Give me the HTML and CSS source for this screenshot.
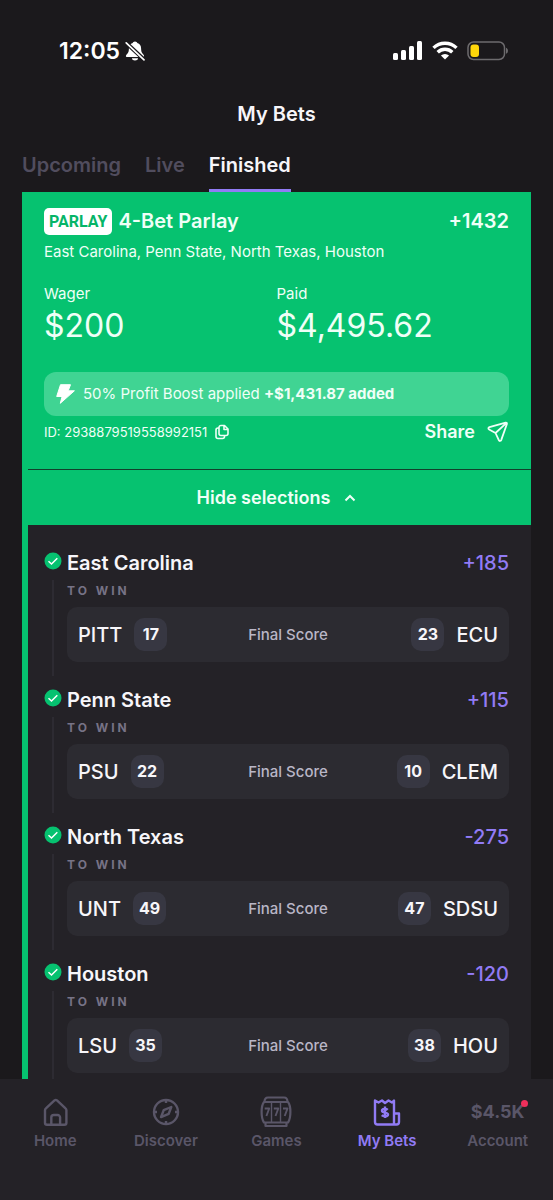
FILE: index.html
```html
<!DOCTYPE html>
<html lang="en">
<head>
<meta charset="utf-8">
<meta name="viewport" content="width=device-width, initial-scale=1">
<title>My Bets</title>
<link rel="stylesheet" href="styles.css">
</head>
<body>
<div class="app">
  <header class="status">
    <div class="status-time">
      <span>12:05</span>
      <svg width="20" height="20" viewBox="0 0 20 20" aria-hidden="true">
        <path fill="currentColor" d="M10 .4c-1.300 0-2.100.9-2.300 1.700C5.200 2.900 3.900 5.100 3.900 7.400c0 2.400-.4 3.700-1.400 5C1.700 13.400.9 14 .9 15c0 .6.5 1 1.200 1h15.800c.7 0 1.200-.4 1.200-1 0-1-.8-1.600-1.600-2.600-1-1.300-1.400-2.600-1.400-5 0-2.300-1.300-4.500-3.800-5.300C12.100 1.300 11.300.4 10 .4zM6.900 17.300h6.200c-.2 1.300-1.500 2.300-3.100 2.300s-2.900-1-3.100-2.300z"/>
        <path stroke="#1b191c" stroke-width="4" d="M.5 1.200 19.500 19"/>
        <path stroke="currentColor" stroke-width="1.700" stroke-linecap="round" d="M1.200 1.800 19 18.800"/>
      </svg>
    </div>
    <div class="status-icons">
      <svg width="30" height="19" viewBox="0 0 30 19" aria-hidden="true" fill="currentColor">
        <rect x="0" y="12" width="5" height="7" rx="1.500"/><rect x="8" y="9" width="5" height="10" rx="1.500"/><rect x="16" y="5" width="5" height="14" rx="1.500"/><rect x="24" y="0" width="5" height="19" rx="1.500"/>
      </svg>
      <svg width="26" height="19" viewBox="0 0 26 19" aria-hidden="true" fill="none" stroke="currentColor" stroke-width="3.400">
        <path d="M1.500 6.900a16.500 16.500 0 0 1 23 0"/><path d="M5.700 11.300a10.400 10.400 0 0 1 14.600 0"/><path fill="currentColor" stroke="none" d="M8.900 14.500a6 6 0 0 1 8.200 0L13 18.600z"/>
      </svg>
      <svg width="42" height="20" viewBox="0 0 42 20" aria-hidden="true">
        <rect x="1" y="1" width="36.500" height="17.500" rx="5.500" fill="none" stroke="#6d6b6e" stroke-width="1.500"/>
        <rect x="3.500" y="3.500" width="8.500" height="12.500" rx="3" fill="#ffd60a"/>
        <path fill="#6d6b6e" d="M39 6.800c2.600.7 2.600 5.400 0 6z"/>
      </svg>
    </div>
  </header>
  <h1 class="title">My Bets</h1>
  <nav class="tabs" aria-label="Bet status">
    <a class="tab" href="#upcoming">Upcoming</a>
    <a class="tab" href="#live">Live</a>
    <a class="tab tab-active" href="#finished" aria-current="page">Finished</a>
  </nav>
  <main class="card">
    <section class="summary">
      <div class="row">
        <div class="heading"><span class="badge">PARLAY</span><h2 class="name">4-Bet Parlay</h2></div>
        <span class="odds-total">+1432</span>
      </div>
      <p class="teams">East Carolina, Penn State, North Texas, Houston</p>
      <dl class="amounts">
        <div><dt>Wager</dt><dd>$200</dd></div>
        <div><dt>Paid</dt><dd>$4,495.62</dd></div>
      </dl>
      <div class="boost">
        <svg width="19" height="20" viewBox="0 0 19 20" aria-hidden="true"><path fill="#fff" stroke="#fff" stroke-linejoin="round" d="M4.500.7h10l-2.300 6.100h6.200L4.300 19.300l1.800-6.800H.7z"/></svg>
        <p>50% Profit Boost applied <strong>+$1,431.87 added</strong></p>
      </div>
      <div class="row">
        <div class="bet-id"><span>ID: 2938879519558992151</span>
          <button class="plain" type="button" aria-label="Copy ID"><svg width="14" height="16" viewBox="0 0 14 16" fill="none" stroke="currentColor" stroke-width="1.600" stroke-linejoin="round"><path d="M6 1.500h3.500L13 5v4.500a2 2 0 0 1-2 2H6a2 2 0 0 1-2-2v-6a2 2 0 0 1 2-2zM9 1.500V5.500h4M4 4H3a2 2 0 0 0-2 2v6.500a2 2 0 0 0 2 2h4.500a2 2 0 0 0 2-2v-1"/></svg></button>
        </div>
        <button class="plain share" type="button">Share
          <svg width="22" height="22" viewBox="0 0 22 22" aria-hidden="true" fill="none" stroke="currentColor" stroke-width="1.800" stroke-linejoin="round" stroke-linecap="round"><path d="M18.700 1.600 2.400 6.100c-1.200.4-1.400 1.800-.3 2.400l6.400 3.500 3.300 7.200c.5 1.100 1.900 1 2.400-.1L19.900 3c.2-.8-.4-1.600-1.200-1.400zM8.500 12l10.800-9.900"/></svg>
        </button>
      </div>
    </section>
    <button class="toggle" type="button" aria-expanded="true">Hide selections
      <svg width="12" height="8" viewBox="0 0 12 8" aria-hidden="true" fill="none" stroke="currentColor" stroke-width="2"><path d="M1.500 6.500 6 2l4.500 4.500"/></svg>
    </button>
    <ul class="legs">
      <li class="leg">
        <div class="rail"><svg class="check" viewBox="0 0 18 18" role="img" aria-label="Won"><circle cx="9" cy="9" r="8.500" fill="#06c270"/><path d="m4.500 9.200 3 2.800 5.800-5.700" fill="none" stroke="#fff" stroke-width="1.500"/></svg></div>
        <div class="leg-body">
          <div class="row"><h3 class="pick">East Carolina</h3><span class="odds">+185</span></div>
          <p class="market">TO WIN</p>
          <div class="score"><div class="side"><span>PITT</span><b>17</b></div><span class="final">Final Score</span><div class="side side-right"><b>23</b><span>ECU</span></div></div>
        </div>
      </li>
      <li class="leg">
        <div class="rail"><svg class="check" viewBox="0 0 18 18" role="img" aria-label="Won"><circle cx="9" cy="9" r="8.500" fill="#06c270"/><path d="m4.500 9.200 3 2.800 5.800-5.700" fill="none" stroke="#fff" stroke-width="1.500"/></svg></div>
        <div class="leg-body">
          <div class="row"><h3 class="pick">Penn State</h3><span class="odds">+115</span></div>
          <p class="market">TO WIN</p>
          <div class="score"><div class="side"><span>PSU</span><b>22</b></div><span class="final">Final Score</span><div class="side side-right"><b>10</b><span>CLEM</span></div></div>
        </div>
      </li>
      <li class="leg">
        <div class="rail"><svg class="check" viewBox="0 0 18 18" role="img" aria-label="Won"><circle cx="9" cy="9" r="8.500" fill="#06c270"/><path d="m4.500 9.200 3 2.800 5.800-5.700" fill="none" stroke="#fff" stroke-width="1.500"/></svg></div>
        <div class="leg-body">
          <div class="row"><h3 class="pick">North Texas</h3><span class="odds">-275</span></div>
          <p class="market">TO WIN</p>
          <div class="score"><div class="side"><span>UNT</span><b>49</b></div><span class="final">Final Score</span><div class="side side-right"><b>47</b><span>SDSU</span></div></div>
        </div>
      </li>
      <li class="leg">
        <div class="rail"><svg class="check" viewBox="0 0 18 18" role="img" aria-label="Won"><circle cx="9" cy="9" r="8.500" fill="#06c270"/><path d="m4.500 9.200 3 2.800 5.800-5.700" fill="none" stroke="#fff" stroke-width="1.500"/></svg></div>
        <div class="leg-body">
          <div class="row"><h3 class="pick">Houston</h3><span class="odds">-120</span></div>
          <p class="market">TO WIN</p>
          <div class="score"><div class="side"><span>LSU</span><b>35</b></div><span class="final">Final Score</span><div class="side side-right"><b>38</b><span>HOU</span></div></div>
        </div>
      </li>
    </ul>
  </main>
  <nav class="bottom" aria-label="Main">
    <a class="item" href="#home">
      <svg width="32" height="34" viewBox="0 0 32 34" aria-hidden="true" fill="none" stroke="currentColor" stroke-width="2.400" stroke-linejoin="round"><path d="M15.500 6.400a2 2 0 0 1 2.500 0l8.500 7.900c.6.500.9 1.200.9 2v12.500a2 2 0 0 1-2 2H8a2 2 0 0 1-2-2V16.300c0-.8.300-1.500.9-2z"/><path d="M12.300 30.500v-7a2.500 2.500 0 0 1 2.500-2.500h3.800a2.500 2.500 0 0 1 2.500 2.500v7"/></svg>
      <span>Home</span></a>
    <a class="item" href="#discover">
      <svg width="32" height="34" viewBox="0 0 32 34" aria-hidden="true" fill="none" stroke="currentColor" stroke-width="2.400" stroke-linejoin="round"><circle cx="16" cy="18" r="12"/><path d="M16 6v3M16 27v3M4 18h3M25 18h3M21.300 13l-2.600 6.800-7.700 3.300 2.700-6.900z"/></svg>
      <span>Discover</span></a>
    <a class="item" href="#games">
      <svg width="34" height="34" viewBox="0 0 34 34" aria-hidden="true" fill="none" stroke="currentColor" stroke-width="2.200" stroke-linejoin="round"><path d="M5 8C1.800 12 1.800 24 5 28.500h24c3.200-4.500 3.200-16.500 0-20.500zM5.500 8c0-3 1.500-4.500 3.500-4.500h16c2 0 3.500 1.500 3.500 4.500M6.500 28.500v3.500h21v-3.500"/><path stroke-width="1.400" d="M12.500 8v20M21.500 8v20"/><path stroke-width="1.900" d="M5.700 14.500h4.500l-2.800 7.500M14.800 14.500h4.500l-2.800 7.500M24 14.500h4.500l-2.800 7.500"/></svg>
      <span>Games</span></a>
    <a class="item item-active" href="#bets" aria-current="page">
      <svg width="32" height="34" viewBox="0 0 32 34" aria-hidden="true" fill="none" stroke="currentColor" stroke-width="2.400" stroke-linejoin="round"><path d="M4 6.500 7.500 8.500l3.500-2L14 9l3.500-2.500 3.500 2 2-2V30.500H6.500A2.500 2.500 0 0 1 4 28zM23 19.500h5V28a2.500 2.500 0 0 1-2.500 2.500H23"/><path d="M16.700 15.800c-1.500-1.500-5.700-1.200-5.700.9 0 2.700 6 1.100 6 3.800 0 2.200-4.500 2.400-6.200.7M14 12.500v11.500"/></svg>
      <span>My Bets</span></a>
    <a class="item" href="#account">
      <span class="balance">$4.5K<i class="dot"></i></span>
      <span>Account</span></a>
  </nav>
</div>
</body>
</html>
```
FILE: styles.css
```css
* { box-sizing: border-box; }
body { margin: 0; background: #1b191c; color: #f7f6fa; font-family: Inter, "Liberation Sans", sans-serif; }
h1, h2, h3, p, dl, dd, ul { margin: 0; padding: 0; font-weight: 500; }
ul { list-style: none; }
a { color: inherit; text-decoration: none; }
svg { display: block; flex: none; }
.app { min-height: 100vh; display: flex; flex-direction: column; }
.status { display: flex; justify-content: space-between; align-items: center; padding: 35px 44px 0 59px; height: 66px; color: #fff; }
.status-time { display: flex; align-items: center; gap: 5px; font-size: 23px; font-weight: 600; }
.status-icons { display: flex; align-items: center; gap: 9px; }
.title { margin-top: 34px; font-size: 20px; line-height: 28px; font-weight: 600; text-align: center; }
.tabs { display: flex; gap: 24px; padding: 0 22px; margin-top: 22px; font-size: 20px; font-weight: 600; line-height: 30px; color: #514d5e; }
.tab { height: 42px; border-bottom: 3px solid transparent; }
.tab-active { color: #f7f6fa; border-bottom-color: #917bf5; }
.card { flex: 1; margin: 0 22px; border-left: 6px solid #06c270; background: #242227; }
.summary { padding: 15px 22px 23px 16px; background: #06c270; color: #effff7; border-bottom: 1px solid #12402c; }
.row { display: flex; justify-content: space-between; align-items: center; }
.heading { display: flex; align-items: center; gap: 6px; }
.badge { padding: 0 5px; border-radius: 5px; background: #fff; color: #06b568; font: 700 16px/27px "Liberation Sans Narrow", Roboto, sans-serif; }
.name, .odds-total { font-size: 20px; line-height: 28px; font-weight: 600; }
.teams { margin-top: 6px; font-size: 15px; line-height: 22px; font-weight: 400; }
.amounts { display: grid; grid-template-columns: 1fr 1fr; margin-top: 21px; }
dt { font-size: 15px; line-height: 20px; font-weight: 400; }
dd { font-size: 32px; line-height: 44px; font-weight: 400; }
.boost { display: flex; align-items: center; gap: 8px; margin: 24px 0 2px; padding: 0 12px; height: 44px; border-radius: 12px; background: #40d493; font-size: 15px; line-height: 22px; }
.boost strong { font-weight: 700; }
.boost p { font-weight: 400; }
.bet-id { display: flex; align-items: center; gap: 8px; font-size: 13px; }
.plain { padding: 0; border: 0; background: none; color: inherit; font: inherit; }
.share { display: flex; align-items: center; gap: 12px; font-size: 18px; line-height: 28px; font-weight: 600; }
.toggle { display: flex; width: 100%; height: 55px; align-items: center; justify-content: center; gap: 14px; padding: 0 6px 0 0; border: 0; background: #06c270; color: #effff7; font: 600 18px/24px Inter, sans-serif; }
.legs { padding: 24px 22px 0 16px; }
.leg { display: flex; gap: 5px; padding-bottom: 10px; }
.leg:last-child { padding-bottom: 0; }
.rail { display: flex; flex-direction: column; align-items: center; width: 18px; gap: 10px; padding-top: 3px; }
.rail::after { content: ""; flex: 1; width: 2px; background: #2d2b32; }
.check { width: 18px; height: 18px; }
.leg-body { flex: 1; padding-bottom: 14px; }
.leg:last-child .leg-body { padding-bottom: 6px; }
.pick, .odds { font-size: 20px; line-height: 28px; }
.pick { font-weight: 600; }
.odds { font-weight: 500; color: #917bf5; }
.market { margin-top: 5px; font-size: 12px; line-height: 18px; font-weight: 700; letter-spacing: 3px; color: #777386; }
.score { display: grid; grid-template-columns: 1fr auto 1fr; align-items: center; height: 55px; margin-top: 7px; padding: 0 11px; border-radius: 10px; background: #2c2b31; }
.side { display: flex; align-items: center; gap: 12px; font-size: 20px; font-weight: 500; }
.side-right { justify-content: flex-end; }
.side b { width: 33px; border-radius: 10px; background: #373742; font-size: 16px; line-height: 33px; font-weight: 700; text-align: center; }
.final { font-size: 15px; line-height: 20px; color: #b9b6c6; }
.bottom { display: grid; grid-template-columns: repeat(5, 1fr); height: 121px; padding-top: 15px; background: #242227; color: #5a5668; font-size: 15px; font-weight: 600; line-height: 20px; }
.item { display: flex; flex-direction: column; align-items: center; gap: 3px; }
.item-active { color: #917bf5; }
.balance { position: relative; height: 34px; font-size: 18px; font-weight: 700; line-height: 36px; }
.dot { position: absolute; top: 6px; right: -3px; width: 7px; height: 7px; border-radius: 50%; background: #ef2f5b; }
```
